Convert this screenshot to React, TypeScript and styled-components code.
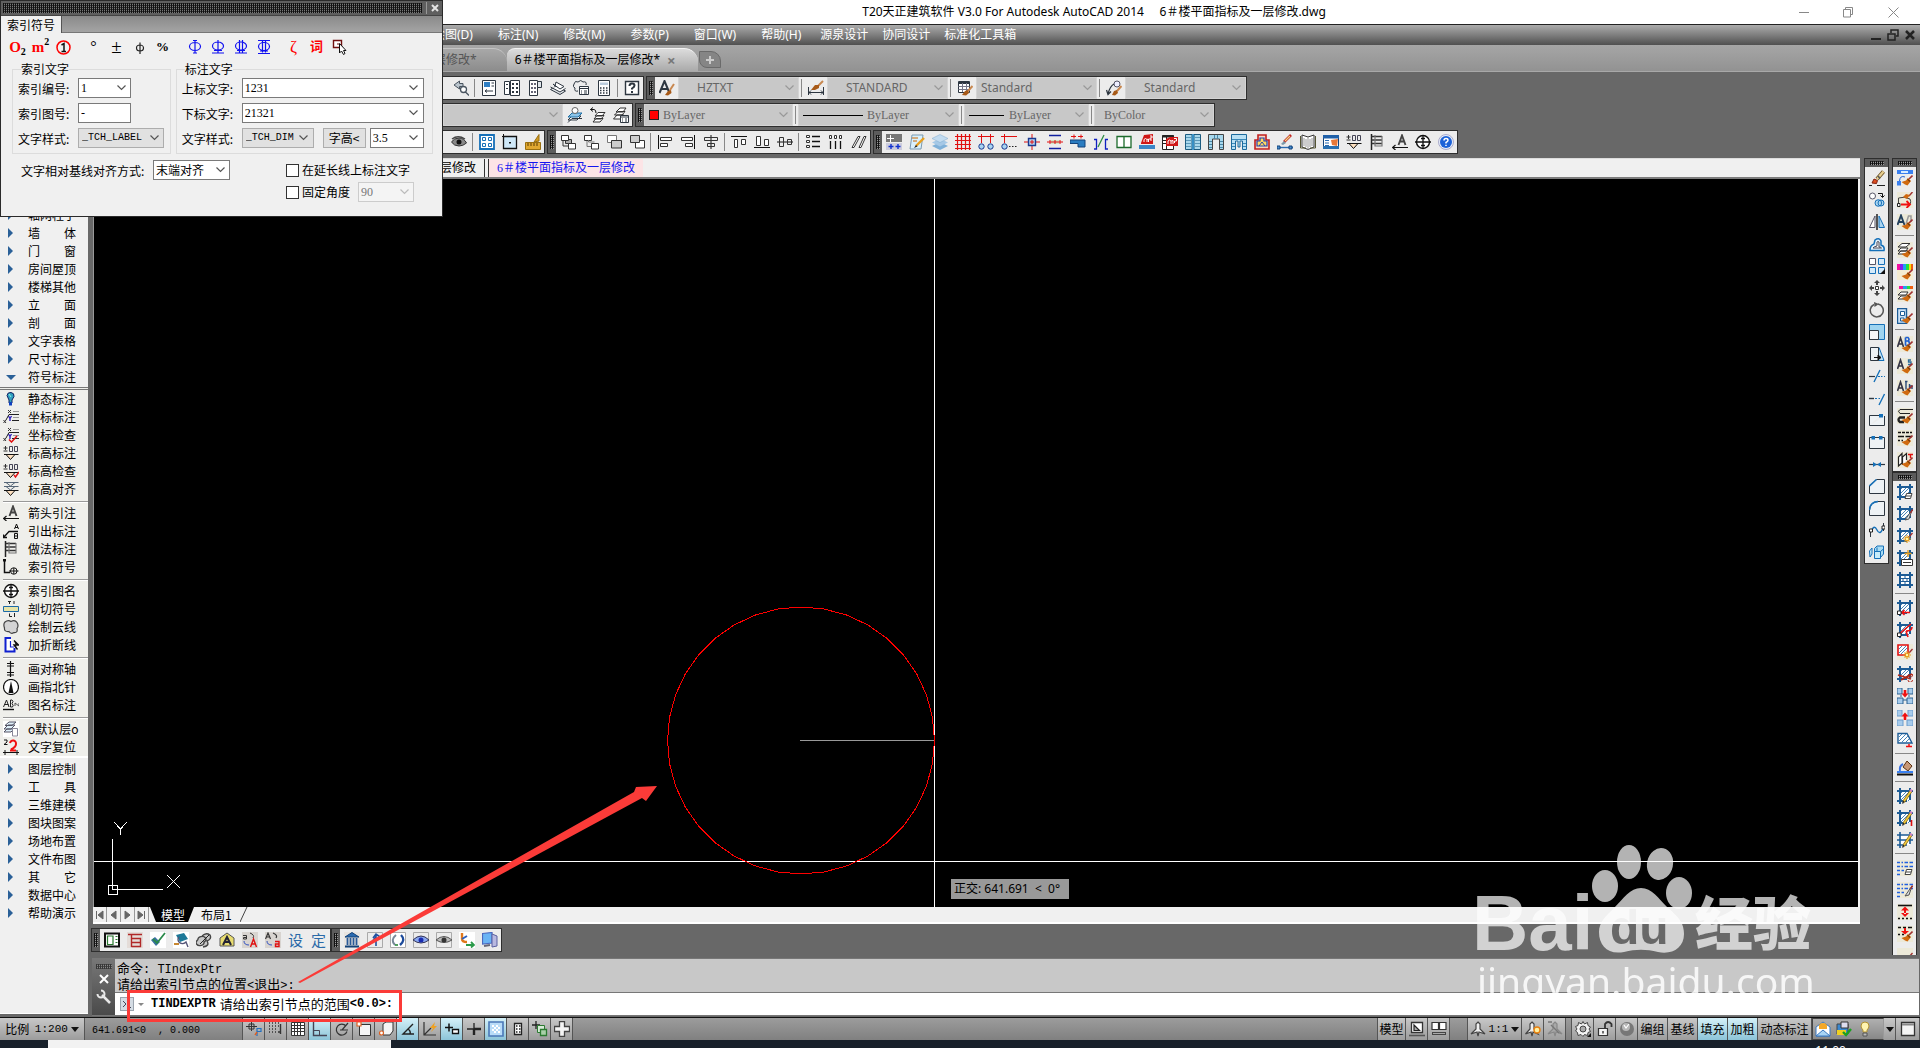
import React from "react";
import styled, { createGlobalStyle, css } from "styled-components";

const sans = `"Noto Sans", "Noto Sans CJK SC", sans-serif`;
const cjk = `"Noto Sans CJK SC", "Noto Sans", sans-serif`;
const song = `"Liberation Serif", "Noto Sans CJK SC", serif`;
const mono = `"Liberation Mono", "Noto Sans CJK SC", monospace`;

const GlobalStyle = createGlobalStyle`
  * { box-sizing: border-box; }
  body { margin: 0; background: #686868; overflow: hidden; }
  button, input, select { font: inherit; color: inherit; margin: 0; padding: 0; border: 0; border-radius: 0; background: none; }
  select { appearance: none; }
`;

/* ---------- glyph library: [path, stroke, fill, stroke width] ---------- */

type Stroke = [string, string?, string?, number?];

const K = "#2d3640";
const BL = "#1670b8";
const LB = "#a9d4f0";
const R = "#e01010";
const N = "none";

const brush: Stroke[] = [
  ["M15.500 5.500L12 9", "#a03030", N, 1.6],
  ["M4.500 12L9 10.500L11 8L14 11L10.500 15.500L8 14.500Z", N, "#d06a10"],
  ["M10.500 9L13 11.500", "#7a3c08", N, 1.2],
];
const paper: Stroke[] = [["M0 0H16V16H0Z", N, "#ece9d8"]];
const pencil: Stroke[] = [
  ["M14 3L6.500 14", "#7a5a10", N, 3],
  ["M14 3L6.500 14", "#f0cc40", N, 1.6],
  ["M13.500 3.500L14.500 1.500", "#d080c0", N, 2.6],
  ["M7 13L5.500 15.500", "#222", N, 1.4],
];
const spark: Stroke[] = [
  ["M15.500 5L12 9", "#a03030", N, 1.4],
  ["M10 7V15M6 11H14M7.500 8.500L12.500 13.500M12.500 8.500L7.500 13.500", "#e8a020", N, 1.2],
  ["M9 10H11V12H9Z", N, "#fff7a0"],
];
const frame: Stroke[] = [
  ["M3 3H13V13H3Z", N, "#fff"],
  ["M3 6L6 3M3 10L10 3M3 13L13 3M7 13L13 7M11 13L13 11", "#4a86b8", N, 1],
  ["M3 0V16M13 0V12M0 3H16M0 13H10", "#1d5c96", N, 2],
];
const eraserBox: Stroke[] = [["M8 14.500L9.500 9.500H15L13.500 14.500Z", "#444", "#fff"], ["M9 12H14", "#444"]];
const knife: Stroke[] = [["M15 4L8 14L12 13Z", "#555", "#d8dde0"], ["M15.500 3.500L13.500 7", "#a03030", N, 1.5]];
const dashes: Stroke[] = [["M0 2.500H3M4.500 2.500H6M7.500 2.500H11M12.500 2.500H16", "#2060e0", N, 1.4], ["M0 6.500H3M4.500 6.500H6M7.500 6.500H11M12.500 6.500H16", "#2060e0", N, 1.4], ["M0 10.500H3M4.500 10.500H7M0 14.500H3", "#2060e0", N, 1.4]];
const elev: Stroke[] = [
  ["M2.500 1V5M0.500 3H4.500M0.500 6H4.500", "#333"],
  ["M6.500 1.500H9.500V6.500H6.500ZM11.500 1.500H14.500V6.500H11.500Z", "#445"],
  ["M1 9.500H15.500M3 9.500L7.500 14.500L12 9.500", "#111", "#fde0c0"],
];
const coord: Stroke[] = [
  ["M0.500 14L3 11M0.500 11L3 14M5 1L8 4M8 1L5 4", "#333"],
  ["M5.500 7L7 9.500L8.500 7M7 9.500V12", "#3020c0", N, 1.4],
  ["M3 11L6 5.500H16M9 11.500H16", "#222"],
  ["M10 2.500H16M10 8.500H16", "#999"],
];

const glyphs: Record<string, Stroke[]> = {
  zoomPrev: [["M6.500 1L1 5L6.500 9V6.500H10V3.500H6.500Z", "#4a5560", "#b9c4cc"], ["M7.500 9.500A3 3 0 1 0 13.500 9.500A3 3 0 1 0 7.500 9.500M12.500 12L16 15.500", "#4a5560", "#fff", 1.3]],
  props: [["M1.500 0.500H14.500V15.500H1.500Z", K, "#fff"], ["M3 2H9V7H3Z", N, "#2f7fc4"], ["M10.500 3H13M10.500 6H13M4 11H12M4 11L6 9.500M4 11L6 12.500", K]],
  design: [["M0.500 1.500H5.500V14.500H0.500ZM6.500 0.500H15.500V15.500H6.500Z", K, "#fff"], ["M8 3H10V5H8ZM12 3H14V5H12ZM8 7H10V9H8ZM12 7H14V9H12ZM8 11H10V13H8ZM12 11H14V13H12ZM2 4H4V5H2ZM2 8H4V9H2Z", N, K]],
  palettes: [["M2.500 0.500H10.500V15.500H2.500Z", K, "#fff"], ["M10.500 1.500H14.500V7.500H10.500Z", K, "#dfe5ea"], ["M4 3H6V5H4ZM7 3H9V5H7ZM4 7H6V9H4ZM7 7H9V9H7ZM4 11H6V13H4ZM7 11H9V13H7Z", N, "#667"]],
  sheets: [["M0.500 9.500L10 14.500L15.500 11L6 6Z", K, "#e3e7ea"], ["M0.500 7L10 12L15.500 8.500M3 4L10 9L14 6.500L6 2L5 6Z", K, "#fff"]],
  markup: [["M1 4Q2 0 5 2Q8 -1 10 2Q14 1 13 5M1 4Q-1 7 2 8Q1 12 5 11", K], ["M6.500 6.500H15.500V14.500H6.500Z", K, "#fff"], ["M7 8.500H15M8 11H9M11 11H14M8 13H9M11 13H14", K]],
  calc: [["M2.500 0.500H13.500V15.500H2.500Z", K, "#fff"], ["M4 2.500H12V5H4Z", N, "#bcd"], ["M4 8H5.500M7 8H8.500M10 8H11.500M4 10.500H5.500M7 10.500H8.500M10 10.500H11.500M4 13H5.500M7 13H8.500M10 13H11.500", K, N, 1.5]],
  help: [["M1.500 1.500H14.500V14.500H1.500Z", K, "#fff", 1.4], ["M5.500 6Q5.500 3.500 8 3.500Q10.500 3.500 10.500 5.500Q10.500 7 8 8.500V9.500M8 11V13", K, N, 2]],
  textStyle: [["M0.500 13L5.500 1L10.500 13M2.500 9H9", K, N, 2], ["M15 4L11 10", "#c88850", N, 2], ["M6 15L9 11L12 10L12.500 13L9 15.500Z", N, "#a85a18"]],
  dimStyle: [["M0.500 7V15M15.500 7V15M1 12.500H15M3 10.500L1 12.500L3 14.500M13 10.500L15 12.500L13 14.500", K], ["M15 1L10 6", "#c88850", N, 2], ["M3 10L7 5L11 5L11 8L7 10Z", N, "#a85a18"]],
  tableStyle: [["M1.500 1.500H12.500V12.500H1.500Z", K, "#fff"], ["M1.500 3H12.500", K, N, 2], ["M1.500 6.500H12.500M1.500 9.500H12.500M5.500 3V12M9.500 3V12", "#778"], ["M15.500 6L11 11", "#c88850", N, 2], ["M5 15L8 11L11 10L12 13L9 15.500Z", N, "#a85a18"]],
  leaderStyle: [["M8 4A3 3 0 1 0 14 4A3 3 0 1 0 8 4", "#556", "#eef"], ["M8 4Q4 6 2 14M0.500 10L2 14.500L5 11.500", K, N, 1.3], ["M15.500 6L11 11", "#c88850", N, 2], ["M6 15L8 11L11 10L12 13L9 15.500Z", N, "#a85a18"]],
  layerState: [["M1 13L5 9H14L10 13ZM1 15.500L5 11.500H15", K, "#fff"], ["M1 10L5 6H15L11 10Z", "#1c6fa5", "#8cc4e8"], ["M5 3.500A3 3 0 1 0 11 3.500A3 3 0 1 0 5 3.500", "#666", "#fff"]],
  layerPrev: [["M3 15L6 11.500H13L10 15ZM4 12L7 8.500H14L11 12ZM5 9L8 5.500H15L12 9Z", "#333", "#fff"], ["M0.500 2.500H4Q6 2.500 6 6M3 0.500L0.500 2.500L3 4.500", "#111"]],
  layerMgr: [["M0.500 12L4 8H11L8 12ZM1.500 8L5 4.500H12L9 8ZM3 5L7 1H13L10 5Z", "#333", "#fff"], ["M7.500 8.500H15.500V15.500H7.500Z", K, "#fff"], ["M8 10H15M9 12H10M12 12H14M9 14H10M12 14H14", K]],
  eye: [["M0.500 8Q3 4 8 4Q13 4 15.500 9Q12 12 8 12Q3 12 0.500 8Z", "#333", "#888"], ["M5.500 8A2.500 2.500 0 1 0 10.500 8A2.500 2.500 0 1 0 5.500 8", N, "#111"], ["M1 5Q7 0.500 14 5", "#444", N, 1.4]],
  vports: [["M1 1H15V15H1Z", BL, "#fff", 1.8], ["M3.500 3.500H6.500V6.500H3.500ZM9.500 3.500H12.500V6.500H9.500ZM3.500 9.500H6.500V12.500H3.500ZM9.500 9.500H12.500V12.500H9.500Z", BL]],
  xclip: [["M1.500 2.500H14.500V14.500H1.500Z", "#111", "#cfe8f8", 1.3], ["M7 8H9V9.500H7Z", N, "#111"], ["M0 2.500H4M1.500 0V4", "#111"]],
  measure: [["M0.500 8.500H15.500V15.500H0.500Z", "#9a7010", "#e0a830"], ["M3 9V12M6 9V12M9 9V12M12 9V12", "#5a3a00"], ["M14 0.500L9 8L14 7Z", "#9a7010", "#d09820"]],
  front: [["M5.500 5.500H11.500V9.500H5.500Z", "#333", "#aaa"], ["M1.500 1.500H8.500V6.500H1.500Z", "#333", "#fff"], ["M8.500 9.500H15.500V15H8.500Z", "#333", "#fff"], ["M3 6V12H8", "#333"]],
  back: [["M1.500 1.500H8.500V6.500H1.500Z", "#333", "#fff"], ["M8.500 9.500H15.500V15H8.500Z", "#333", "#fff"], ["M5.500 6V8H11.500M4 7V12.500H8", "#777"]],
  above: [["M1.500 1.500H10.500V8.500H1.500Z", "#777", "#fff"], ["M5.500 6.500H15.500V14H5.500Z", "#333", "#ccc"]],
  under: [["M6.500 6.500H15.500V14H6.500Z", "#333", "#fff"], ["M1.500 1.500H10.500V8.500H1.500Z", "#333", "#ccc"]],
  alignL: [["M1.500 1V15", "#111"], ["M3.500 3.500H14.500V6.500H3.500ZM3.500 9.500H10.500V12.500H3.500Z", "#333", "#fff"]],
  alignR: [["M14.500 1V15", "#111"], ["M1.500 3.500H12.500V6.500H1.500ZM5.500 9.500H12.500V12.500H5.500Z", "#333", "#fff"]],
  alignC: [["M8 1V15", "#111"], ["M1.500 3.500H14.500V6.500H1.500ZM4.500 9.500H11.500V12.500H4.500Z", "#333", N]],
  alignT: [["M0 2.500H16", "#111"], ["M3.500 5.500H6.500V13.500H3.500ZM10.500 5.500H14.500V10.500H10.500Z", "#333", "#fff"]],
  alignB: [["M0 13.500H16", "#111"], ["M2.500 2.500H6.500V11.500H2.500ZM10.500 5.500H14.500V11.500H10.500Z", "#333", "#fff"]],
  alignM: [["M0 8H16", "#111"], ["M2.500 3.500H6.500V12.500H2.500ZM10.500 5.500H14.500V10.500H10.500Z", "#333", N]],
  distV: [["M1.500 1.500H4.500V3.500H1.500ZM1.500 6.500H4.500V8.500H1.500ZM1.500 11.500H4.500V13.500H1.500Z", "#333", "#fff"], ["M7 2.500H15M7 7.500H15M7 12.500H15", "#111", N, 1.3]],
  distH: [["M1.500 1.500H3.500V4.500H1.500ZM6.500 1.500H8.500V4.500H6.500ZM11.500 1.500H13.500V4.500H11.500Z", "#333", "#fff"], ["M2.500 7V15M7.500 7V15M12.500 7V15", "#111", N, 1.3]],
  distS: [["M1 13.500L7 2.500H9L3 13.500ZM8 13.500L13 2.500H15L10 13.500Z", "#333", "#fff"]],
  tableDoor: [["M0 0H16V8H0Z", N, "#777"], ["M4.500 1V8M1 4.500H8", "#fff"], ["M0 9H16V16H0Z", N, "#ccd"], ["M5 10V15M2.500 12.500H7.500M12 10V15M9.500 12.500H14.500", "#1030d0", N, 1.4]],
  editNote: [["M3 1H14L12 15H1Z", "#7a9ab0", "#d8f0fc"], ["M3 4H9M4 7H8", "#c60"], ["M15 4L7 12", "#e8a020", N, 2.4], ["M5 14L7 11L8.500 12.500Z", N, "#222"]],
  layersBlue: [["M0 12L8 8L16 12L8 16Z", N, "#7fb0d8"], ["M0 8.500L8 4.500L16 8.500L8 12.500Z", N, "#a5c8e6"], ["M0 4.500L8 0.500L16 4.500L8 8.500Z", "#7fa8cc", "#c3dcf0", 0.5]],
  gridRed: [["M2.500 0V16M6.500 0V16M10.500 0V16M14.500 0V16M0 2.500H16M0 6.500H16M0 10.500H16M0 14.500H16", R, N, 1.2]],
  axisTwo: [["M0 2.500H16M3.500 0V9M12.500 0V9", R], ["M0.800 12.500A2.700 2.700 0 1 0 6.200 12.500A2.700 2.700 0 1 0 0.800 12.500M9.800 12.500A2.700 2.700 0 1 0 15.200 12.500A2.700 2.700 0 1 0 9.800 12.500", "#1a3a90", LB]],
  axisOne: [["M0 2.500H16M3.500 0V9", R], ["M0.800 12.500A2.700 2.700 0 1 0 6.200 12.500A2.700 2.700 0 1 0 0.800 12.500", "#1a3a90", LB], ["M8 12.500H9.500M11 12.500H12.500M14 12.500H15.500", "#222"]],
  column: [["M8 0V16M0 8H16", R], ["M4.500 4.500H11.500V11.500H4.500Z", "#1a3a90", "#b8d0f0", 1.4], ["M8 6V10M6 8H10", R]],
  wall: [["M2 1.500H14M2 14.500H14", "#1020a0", N, 1.5], ["M4 6H12V10H4Z", N, "#cde8c8"], ["M0 8H16M3 6V10M13 6V10M8 6V10", R]],
  beam: [["M0 6H15V13H8V9.500H0Z", "#13437a", "#2a7cc0"], ["M1 2.500H6M8 2.500H13M4 0.500V4.500M11 0.500V4.500", R]],
  door: [["M1 5.500H3.500V15H1M15 5.500H12.500V15H15", "#1020c0", N, 1.3], ["M5 13L11 1", "#2a8a40", N, 1.2]],
  window2: [["M1 2.500H15V13.500H1ZM8 2.500V13.500", "#1c6a2c", "#fff", 1.3]],
  area: [["M2 9L5 1L14 0V10H2Z", N, "#d01818"], ["M5 8V5.500L6.500 4.500L8 5.500V8M8 5.500L9.500 5V8M11 2H13V4H11V6H13", "#fff"], ["M0 11H16V15H0Z", N, "#3a86c8"]],
  areaTable: [["M0.500 1.500H11.500V15.500H0.500Z", "#222", "#fff"], ["M0 2.500H12", "#222", N, 2], ["M0.500 6.500H11M0.500 9.500H11M4.500 3V15", "#222"], ["M4 5L8 3H16V12H4Z", N, "#d01818"], ["M6 10V7L7.500 6L9 7V10M9 7L11 6.500V10M12 4.500H14.500V7H12.500V9", "#fff"]],
  stairsA: [["M0.500 0.500H7V15.500H0.500ZM9 0.500H15.500V15.500H9Z", "#1c5c80", "#a9d8ec"], ["M1 3.500H6M1 6.500H6M1 9.500H6M1 12.500H6M9.500 3.500H15M9.500 6.500H15M9.500 9.500H15M9.500 12.500H15", "#5a98b8"], ["M8 0V16", "#1c88c8", N, 1.5]],
  stairsB: [["M0.500 15.500V0.500H15.500V15.500H11.500V5H4.500V15.500Z", "#444", "#a9d8ec"], ["M1 7.500H4M1 10.500H4M1 13.500H4M12 7.500H15M12 10.500H15M12 13.500H15M6.500 1V5M9.500 1V5", "#4a88a8"]],
  stairsC: [["M0.500 0.500H15.500V15.500H11.500V7H9V13H7V7H4.500V15.500H0.500Z", "#1c6a9c", "#b9e0f4"], ["M1 5.500H15M1 9.500H4M12 9.500H15M1 12.500H4M12 12.500H15", "#3a88b8"]],
  plot: [["M1 15V6H4V1H12V6H15V15Z", "#c02020", "#f8d8c0", 1.6], ["M6 4H10V7H13V12H3V7H6Z", "#2040b0", "#ffd860", 1.2], ["M5 12L8 8L11 12", "#2040b0"]],
  brushDim: [["M14 1L7 8", "#c02020", N, 2.6], ["M13 2L8 7", "#f0d880", N, 1.2], ["M4 10L7 7L9 9L6 11Z", N, "#7a98a8"], ["M0 13.500H16", "#2a6ab0", N, 1.4], ["M0 12H3V15H0ZM12 12H15V15H12Z", "#13437a", "#4a90d0"]],
  book: [["M8 3L2 1V13L8 15.500L14 13V1Z", "#333", "#fff"], ["M8 3V15.500M4 4V12M6 5V13M10 5V13M12 4V12", "#999"], ["M0.500 2V14H6M15.500 2V14H10", "#553"]],
  panel: [["M0.500 1.500H15.500V14.500H0.500Z", "#13437a", "#fff"], ["M0 1H16V4.500H0Z", N, "#2060a8"], ["M2 6.500H6M2 9H6M2 11.500H6", "#2a6ab0"], ["M8 6L15 5L14 12L9 11Z", N, "#e87838"], ["M0 12H16V15H0Z", N, "#2a70b0"]],
  elevMark: elev,
  practice: [["M2.500 0V16", "#222", N, 1.5], ["M2.500 2.500H13M2.500 6H13M2.500 9.500H13", "#333", N, 1.3], ["M6 1V12H13V2", "#777", N, 1.2]],
  arrowA: [["M6.500 11L10 1.500L13.500 11M7.500 7.500H12.500", "#444", N, 1.9], ["M0.500 13.500H16M3.500 11L0.500 13.500L3.500 16", "#111", N, 1.2]],
  indexName: [["M1.500 8A6.500 6.500 0 1 0 14.500 8A6.500 6.500 0 1 0 1.500 8", "#111", "#fff", 1.4], ["M0 8H16M8 2V14M6 4.500H10M6 11.500H10", "#111", N, 1.3]],
  helpBall: [["M0.500 8A7.500 7.500 0 1 0 15.500 8A7.500 7.500 0 1 0 0.500 8", "#aac", "#e6eefa"], ["M2 8A6 6 0 1 0 14 8A6 6 0 1 0 2 8", N, "#1c62d8"], ["M6 6.500Q6 4.500 8 4.500Q10 4.500 10 6.200Q10 7.500 8 8.500V9.500M8 10.800V12", "#fff", N, 1.5]],
  /* modify palette */
  erase: [["M14.500 1.500L8 9", "#6b5020", N, 4], ["M14.500 1.500L8 9", "#e8cf90", N, 2.4], ["M9 6L11 8.500", "#555", N, 1.5], ["M3 13L5 9L8.500 10.500L7.500 13.500Z", "#802010", "#e05020"], ["M0 15.500H3M8 15.500H16", "#222"]],
  copy: [["M0.500 4A3 3 0 1 0 6.500 4A3 3 0 1 0 0.500 4", "#556", "#fff"], ["M9 11A3 3 0 1 0 15 11A3 3 0 1 0 9 11M6 11A3.300 3.300 0 1 0 12.600 11A3.300 3.300 0 1 0 6 11", BL, LB], ["M9 1.500H13.500V5M11.500 3.500L13.500 5.500L15.500 3.500", "#111"]],
  mirror: [["M6 2L0.500 13.500H6Z", "#556", "#fff"], ["M10 2L15.500 13.500H10Z", BL, LB], ["M8 0V16", "#111", N, 1.4]],
  offset: [["M1 14.500H15Q16 10 12 9V5Q10 1 6 4L5 8Q1 9 1 14.500Z", BL, "#e4f2fc", 1.5], ["M4 12H12.500Q12 11 10 11V6Q8.500 5 8 6V10Q5 10.500 4 12Z", "#445", "#fff"]],
  array: [["M0.500 0.500H6.500V6.500H0.500Z", "#556", "#fff"], ["M9.500 0.500H15.500V6.500H9.500ZM0.500 9.500H6.500V15.500H0.500ZM9.500 9.500H15.500V15.500H9.500Z", BL, "#d4eafa"], ["M16 11V16H11Z", N, "#111"]],
  move: [["M6.500 6.500H9.500V9.500H6.500Z", "#333", "#fff"], ["M8 0L11 3H9V5H7V3H5ZM8 16L11 13H9V11H7V13H5ZM0 8L3 5V7H5V9H3V11ZM16 8L13 5V7H11V9H13V11Z", N, "#444"]],
  rotate: [["M5 2.500A6.500 6.500 0 1 0 9 2", "#555", N, 1.5], ["M5 0L10 2L5.500 5Z", N, "#555"]],
  scale: [["M0.500 0.500H15.500V15.500H0.500Z", BL, "#9fd4f0"], ["M0.500 6.500H9.500V15.500H0.500Z", K, "#f4f6f8"]],
  stretch: [["M10 1.500L15 14.500H8V1.500Z", BL, "#bfe0f4"], ["M1.500 1.500H9.500V14.500H1.500Z", K, "#eef2f5"], ["M5 11.500H11M9 9L12 11.500L9 14Z", "#111", "#111"]],
  trim: [["M0 8.500H6", K, N, 1.2], ["M5 14L11 2", BL, N, 1.4], ["M9 8.500H11M12 8.500H13.500M15 8.500H16", BL]],
  extend: [["M0 8.500H5", K, N, 1.4], ["M6 8.500H8M9.500 8.500H11", BL], ["M10 15L15.500 4", BL, N, 1.4]],
  breakPt: [["M0.500 13.500V3.500H11M15.500 4V13.500H0.500", K, "#eef2f5"], ["M10 2H14V5.500H10Z", N, BL]],
  breakOn: [["M3 3.500H0.500V14.500H15.500V3.500H13M5.500 3.500H10", K, "#eef2f5"], ["M2.500 2H6V5.500H2.500ZM10 2H13.500V5.500H10Z", N, BL]],
  join: [["M0 8.500H16", K, N, 1.2], ["M4 6L8 8.500L4 11ZM12 6L8 8.500L12 11Z", N, BL]],
  chamfer: [["M0.500 8L7.500 1.500H15.500V15.500H0.500Z", K, "#eef2f5"], ["M0.500 8L7.500 1.500", BL, N, 1.6]],
  fillet: [["M0.500 15.500V10Q1 2 9 1.500H15.500V15.500Z", K, "#eef2f5"], ["M0.500 10Q1 2 9 1.500", BL, N, 1.6]],
  blend: [["M1.500 15V7M14.500 1V9", K], ["M2.500 9Q5 2 8 8Q11 14 14 6", BL, N, 1.4], ["M0.500 7H3.500V10H0.500ZM13 4H16V7H13Z", "#222", "#fff"]],
  explode: [["M5.500 4.500L8 2H14.500V10L12 13H5.500Z", BL, "#a9dcf4"], ["M5.500 7.500H11.500V14.500H5.500ZM11.500 7.500L15 4.500M0.500 7L3 4V10L1 13ZM8 7V3.500", BL, "#c8ecfa"]],
  /* layer / property palette */
  pA: [["M0 0H16V4H0Z", N, "#3a80f0"], ["M4 1H11V3H4Z", N, "#d8ecff"], ["M0 11H4V15.500H0Z", N, "#3a80f0"], ["M2.500 11Q3 5 8 7", "#2060d0"], ...brush],
  pB: [...paper, ["M1.500 12V6Q7 4 13 7Q15 12 11 14", "#444"], ["M0.500 11.500H3V14.500H0.500Z", "#222", "#fff"], ["M4 12.500H12M9.500 9L13 12.500L9.500 16", "#f01010", N, 1.8], ["M15.500 0L12 4", "#a03030", N, 1.4], ["M6 5L9 2L13 3L10 7Z", N, "#d06a10"]],
  pC: [...paper, ["M0.500 11L4 1.500L7.500 11M2 8H6", "#24405c", N, 1.9], ["M9 10L11.500 2H14V8", "#999", N, 1.5], ...brush],
  pD: [...paper, ["M1 12L4 9H11L9 12ZM1 9L4 6H11L9 9ZM1 5L5 1.500H13L9 5Z", "#333", "#fff"], ...brush],
  pE: [["M0 0H16V16H0Z", N, "#f4ecd0"], ["M1.500 0V6", "#f010a0", N, 3], ["M4.500 0V6", "#8020f0", N, 3], ["M7.500 0V6", "#20a0f0", N, 3], ["M10.500 0V6", "#20e040", N, 3], ["M13 0V6", "#f8e010", N, 2], ["M15 0V6", "#f06010", N, 2], ...brush],
  pF: [...paper, ["M2 1.500H6", "#f010a0", N, 3], ["M6 1.500H10", "#20a0f0", N, 3], ["M10 1.500H13", "#20e040", N, 3], ["M13 1.500H16", "#f06010", N, 3], ["M1 13L4 10H11L9 13ZM1 9L4 6H11L9 9Z", "#333", "#fff"], ...brush],
  pG: [["M0.500 0.500H9.500V15.500H0.500Z", "#1d5c96", "#cfe4f8", 1.4], ["M3.500 3.500H7.500V7.500H3.500ZM3.500 10H7V13H3.500Z", "#1d5c96", "#fff"], ...brush],
  pH: [...paper, ["M0.500 11L3.500 2L6.500 11M1.500 8H5.500", "#334", N, 1.6], ["M8.500 1.500V9.500M8.500 1.500H11Q13 3.500 11 5H8.500M11 5Q14 7 11 9.500H8.500", "#2060d0", N, 1.7], ...brush],
  pI: [...paper, ["M0.500 11L3.500 2L6.500 11M1.500 8H5.500", "#334", N, 1.6], ["M14 2H11.500V4H14V6.500H11", "#2a6a98", N, 1.3], ...brush],
  pJ: [...paper, ["M0.500 11L3.500 2L6.500 11M1.500 8H5.500", "#334", N, 1.6], ["M9 1.500V9.500M8 1.500H10.500M12.500 4V9M12.500 6H15V9", "#2a4a78", N, 1.4], ...brush],
  pK: [...paper, ["M16 1.500H3Q0 3 3 5.500H13", "#222"], ["M8 9.500H3Q0 11.500 3 14H7", "#222", N, 2.4], ...brush],
  pL: [...paper, ["M1 2.500H4M5 2.500H8M9 2.500H12M13 2.500H15M1 6.500H7M8.500 6.500H15M1 10.500H3M4.500 10.500H6", "#111", N, 1.3], ...brush],
  pM: [...paper, ["M1.500 14V5L5 1.500V11ZM5.500 13V5L9.500 1.500V8", "#222", "#fff", 1.2], ["M11 2.500H16M13.500 2V6", R, N, 1.4], ...brush],
  /* hatch palette */
  hA: [...frame, ...eraserBox],
  hB: [...frame, ...knife],
  hC: [...frame, ...spark],
  hD: [...frame, ["M4.500 9.500H15.500V15.500H4.500Z", "#333", "#fff"], ["M6 12.500H14", "#333"], ["M11 0V7M7.500 3.500H14.500", "#e8a020", N, 1.4]],
  hE: [["M3 0V16M13 0V16M0 3H16M0 13H16", "#1d5c96", N, 2], ["M4 4H12V12H4Z", N, "#fff"], ["M4 6.500H12M4 9.500H12M8 4V6.500M6 7V9.500M10 7V9.500M8 10V12", "#1d5c96"]],
  hF: [...frame, ["M5 12.500H13M7.500 10L5 12.500L7.500 15", "#f01010", N, 1.6], ["M0.500 11H4V14.500H0.500Z", "#222", "#fff"]],
  hG: [...frame, ["M1 13L14 2M15 5Q15 9 9 9M9 9L11 15", "#f01010", N, 1.6], ["M0.500 11H4V14.500H0.500Z", "#222", "#fff"]],
  hH: [...paper, ["M1 1H11V11H1Z", R, "#fff", 1.6], ["M2 5L5 2M2 9L9 2M4 10L10 4", "#4a86b8"], ...spark],
  hI: [...frame, ["M1 9L14 13M15 8L4 14", "#b02818", N, 1.8], ["M12 8A2 2 0 1 0 15.500 8M11 14A2 2 0 1 0 15.500 14", "#b02818"]],
  hJ: [["M0 0H5V6H0ZM11 0H16V6H11ZM0 10H6V16H0ZM10 10H16V16H10Z", "#2a6090", "#a8ccec"], ["M8 2V7", "#f01010", N, 2.6], ["M4.500 5.500H11.500L8 9.500Z", N, "#f01010"], ["M6 12H10M3 8H5M11 8H13", "#2a6090"]],
  hK: [["M0 0H5V6H0ZM11 0H16V6H11ZM0 10H6V16H0ZM10 10H16V16H10Z", "#6a9ccc", "#a8ccec"], ["M8 5V10", "#f01010", N, 2.6], ["M4.500 6.500H11.500L8 2.500Z", N, "#f01010"]],
  hL: [["M1 1.500H10L15 11H1Z", "#1d5c96", "#fff", 1.4], ["M2 5L5 2M2 9L9 2M5 10L11 4M9 10L12 7", "#4a86b8"], ["M9 14.500H15M12 12V15", "#f01010", N, 1.5]],
  hM: [["M6 7L10 1L15 6L11 11Z", "#5a3010", "#c89878"], ["M6 4Q2 6 3 11", "#3a70e0", N, 2], ["M0 11H16V13H0Z", N, "#3a80f0"], ["M0 14.500H16", "#111", N, 2]],
  hN: [...frame, ...pencil],
  hO: [...frame, ...pencil, ["M14.500 10V16", R, N, 1.6]],
  hP: [["M3 3H13V13H3Z", N, "#fff"], ["M3 0V16M13 0V12M0 3H16M0 8H16M0 13H10", "#1d5c96", N, 1.6], ...pencil],
  lA: [...paper, ...dashes, ...eraserBox],
  lB: [...paper, ...dashes, ...knife],
  lC: [...paper, ["M1 1.500H15", "#111", N, 1.6], ["M1 14.500H3M5 14.500H7M9 14.500H11M13 14.500H15", "#111", N, 1.6], ["M8 2.500L12 6.500H4ZM8 13L12 9H4ZM7 6H9V10H7Z", N, "#f01010"]],
  lD: [...paper, ["M1 1.500H4M6 1.500H9M11 1.500H15M1 8.500H3M5 8.500H7", "#111", N, 1.4], ["M7 2H9V5H12L8 8.500L4 5H7Z", N, "#f01010"], ...brush],
  lE: [...paper, ...spark],
  /* palette tree */
  bulb: [["M4 4.500A3.500 3.500 0 1 1 11 5.500L9 9V12H6V9Z", "#102060", "#30a0c0"], ["M6 11H9V14.500H6Z", N, "#1040c0"], ["M6 3L8 6", "#90f0e0"]],
  coord,
  coordCheck: [...coord, ["M6 12.500L8.500 15L14 9", R, N, 1.5]],
  elevCheck: [...elev, ["M11 12L12.500 14L16 9", R, N, 1.4]],
  elevAlign: [["M1 1.500H15.500M3 1.500L7.500 5L12 1.500M1 5.500H15.500M3 5.500L7.500 9L12 5.500", "#567"], ["M1 9.500H15.500M3 9.500L7.500 14.500L12 9.500", "#111", "#fde0c0"]],
  leaderOut: [["M0.500 14.500L6 8.500H15M0.500 11.500V14.500H4", "#111", N, 1.3], ["M11.500 6L13.500 1L15.500 6M12 4.500H15M11.500 10.500V15.500H14.500V10.500ZM11.500 13H14.500", "#111"]],
  index: [["M1.500 0V13.500H7", "#111", N, 1.5], ["M7.500 12A3 3 0 1 0 14 12A3 3 0 1 0 7.500 12M6 12H15.500M10.800 9V15", "#111"], ["M0 0H3V2.500H0Z", N, "#111"]],
  section: [["M0.500 5.500H15.500V10.500H0.500Z", "#1c6aa8", "#e8e4a8"], ["M6.500 0V3M5 0.500H8M11 0V3M6.500 12.500V15.500H9M11.500 12V16", "#222"]],
  cloud: [["M2 3Q5 0.500 8 2.500Q12 0.500 14 3.500Q16 7 14 9.500Q15 14 11 13.500Q8 15.500 6 12.500Q1 13 1.500 9Q0 5 2 3Z", "#444", "#d4d4d4", 1.2]],
  breakLine: [["M8 1H2.500V14.500H11.500V11", "#1020d0", "#fff", 2], ["M11 3.500L15.500 8L11 8L14.500 12.500", "#111", "#111", 1.4], ["M7.500 4V10H11", "#1020d0", N, 1.2]],
  symAxis: [["M7.500 0V16", "#111", N, 1.2], ["M4 2.500H11M4 5H11M4 11.500H11M4 14H11", "#111"]],
  north: [["M0.500 8A7.500 7.500 0 1 0 15.500 8A7.500 7.500 0 1 0 0.500 8", "#111", "#fff", 1.2], ["M8 2L10.500 14H5.500Z", N, "#111"]],
  caption: [["M0.500 10L3.500 3L6 10M1.500 7.500H5.500M7.500 3V10H9.500Q11 8.500 9 6.500Q11 4 9 3H7.500", "#222"], ["M0 12.500H11", "#111", N, 1.4], ["M12 9V6L16 9V6", "#555"]],
  defLayer: [["M0 0H16V16H0Z", N, "#fff"], ["M1 8L5 4H12L8 8ZM1 11L4 8H11L8 11ZM2 4.500L6 1H13L9 4.500Z", "#556", "#dff0fa"], ["M9.500 7.500H14.500V15H9.500Z", "#889", "#fff"]],
  textReset: [["M1 1H4V3L1 5.500H4.500", "#111"], ["M7 4A3 3 0 0 1 13 5Q13 8 8 10.500M13 11.500H7", "#f01010", N, 2], ["M0 13.500H16M2 11V16M14 11V16", "#111"]],
  /* bottom palettes */
  bA: [["M1 1.500H15V14.500H1Z", "#111", "#fff", 2], ["M3.500 4H9V12.500H3.500Z", "#2a7a30", "#fff", 1.2], ["M12.500 4V5M12.500 7V8M12.500 10V11", "#2a7a30", N, 2]],
  bB: [["M0 0H16V16H0Z", N, "#e4dcd8"], ["M1 2.500H15M4.500 3V15M4.500 6.500H13.500V14.500H4.500M4.500 10.500H13", "#b02828", N, 1.4]],
  bC: [["M0 0H16V16H0Z", N, "#fff"], ["M1 8L6 14L10 10L5 5Z", N, "#3a70a0"], ["M3 7L7 11L15 1", "#2a8a4a", N, 1.8]],
  bD: [["M0 0H16V16H0Z", N, "#fff"], ["M3 3L11 1L15 7L7 10Z", N, "#1c7898"], ["M6 5A4 3.500 0 1 0 13 10L15 15", "#557", N, 1.4], ["M1 12H6", "#c88830", N, 2]],
  bE: [["M2 8A4 3 0 1 1 8 10A4 3 0 1 1 2 8M6 4Q10 0 14 3Q16 7 11 9Q14 14 7 15", "#444", "#c8c8c8", 1.4], ["M4 12L13 3", "#222"]],
  bF: [["M1 6L8 1L15 6V14H1Z", "#555", "#e8dc70"], ["M4 13L8 5L12 13M6 10H10", "#223", N, 2]],
  bG: [["M0 0H16V16H0Z", N, "#d8d4d0"], ["M1 3.500H4.500V7H1.500V5.500H4.500M8 1Q13 3 11 6", "#333"], ["M2 9Q2 13 7 13", "#3050c0"], ["M8.500 15L11.500 7L14.500 15M9.500 12H13.500", R, N, 1.4]],
  bH: [["M0 0H16V16H0Z", N, "#d8d4d0"], ["M0.500 7L3 1L5.500 7M1.500 5H4.500M8 1Q13 3 11 6", "#333", N, 1.2], ["M2 9Q2 13 7 13", "#3050c0"], ["M10 9.500H14V14.500H10.500V12H14", R, N, 1.4]],
  gov: [["M0 0H16V16H0Z", N, "#e8e4e0"], ["M8 0.500L15 5H1Z", "#13437a", "#2a6ab0"], ["M3.500 6V13M6.500 6V13M9.500 6V13M12.500 6V13", "#2a5a98", N, 1.8], ["M1 14.500H15", "#13437a", N, 2]],
  hook: [["M0.500 0.500H15.500V15.500H0.500Z", "#aaa", "#ececec"], ["M2 13L9 5M9 3V14M6 6L9 2L13 5", "#2050a0", N, 1.6]],
  swirl: [["M0.500 0.500H15.500V15.500H0.500Z", "#aaa", "#fff"], ["M6 3Q0 8 5 13", "#789", N, 2], ["M11 3Q16 8 10 13", "#1c4a9a", N, 2.4], ["M5 13H8", "#2a8a3a", N, 1.6]],
  eyeBlue: [["M0.500 0.500H15.500V15.500H0.500Z", "#aaa", "#ececec"], ["M0 8Q8 0 16 8Q8 14 0 8Z", "#335", "#8aa8f0"], ["M5.500 8A2.500 2.500 0 1 0 10.500 8A2.500 2.500 0 1 0 5.500 8", N, "#1a2cb0"]],
  eyeGray: [["M0.500 0.500H15.500V15.500H0.500Z", "#aaa", "#ececec"], ["M0 8Q8 1 16 8Q8 13 0 8Z", "#555", "#bbb"], ["M5.500 8A2.500 2.500 0 1 0 10.500 8A2.500 2.500 0 1 0 5.500 8", N, "#333"]],
  swap: [["M0 0H16V16H0Z", N, "#fff"], ["M3 1V7Q3 10 8 10", "#e0781c", N, 2.4], ["M8 4L3 7", "#2a60c0", N, 2], ["M7 13H14M12 10L15 13L12 15.500", "#2a9a4a", N, 1.8]],
  screens: [["M0.500 1.500L10 0.500V11L0.500 12Z", "#4a68c0", "#6ab4f4", 1.2], ["M10 2L15 4V14L10 15Z", "#5a60a0", "#b8b8e0"], ["M2 14L8 13", "#667", N, 2]],
  /* status bar */
  sInfer: [["M0 5.500H11M5.500 0V10M3 3H8V8H3Z", "#333"], ["M10.500 10.500H15V7.500H11V15", "#2070c0", N, 1.2], ["M9 14L11 11", "#e06020", N, 1.4]],
  sSnap: [["M1 2H2M4 2H5M7 2H8M10 2H11M1 5H2M4 5H5M7 5H8M10 5H11M1 8H2M4 8H5M7 8H8M1 11H2M4 11H5M7 11H8M10 11H13M12.500 3V13", "#333", N, 1.4]],
  sGrid: [["M1.500 1.500H14.500V14.500H1.500ZM4.500 1V15M7.500 1V15M10.500 1V15M1 4.500H15M1 7.500H15M1 10.500H15", "#333", "#fff"]],
  sOrtho: [["M1.500 0V14.500H15", "#445", N, 1.4], ["M1.500 9.500H7.500V14", "#445"]],
  sPolar: [["M12 5A5.500 5.500 0 1 0 13 10.500M8 9L14 2M6 9H14", "#333", N, 1.2]],
  sOsnap: [["M3.500 3.500H14.500V14.500H3.500Z", "#333", "#f4f4f4"], ["M1 1H5V5H1Z", "#e06020", "#fff", 1.2]],
  s3d: [["M5 3L8 1H15V10L12 14H5Z", "#333", "#f4f4f4"], ["M1.500 12A2 2 0 1 0 5.500 12A2 2 0 1 0 1.500 12", "#e06020", "#fff", 1.2]],
  sOtrack: [["M13 3L3 13H14M8 8Q11 10 10 13", "#222", N, 1.4]],
  sDucs: [["M2 1V14H14M2 14L9 7", "#333", N, 1.2], ["M13 1L8 7H11L9 11L15 5H12Z", N, "#f0a020"]],
  sDyn: [["M1 6.500H9M5 2.500V10.500", "#111", N, 1.5], ["M8.500 8.500H14.500V12.500H8.500Z", "#111", "#fff", 1.3]],
  sLwt: [["M1 8H8M8 8V2", "#222", N, 1.3], ["M8 8H15M8 8V14", "#222", N, 2.4]],
  sTpy: [["M1 1H15V15H1Z", "#4a78b8", "#b8dcf8", 1.6], ["M4 4H6V6H4ZM8 4H10V6H8ZM6 6H8V8H6ZM10 6H12V8H10ZM4 8H6V10H4ZM8 8H10V10H8ZM6 10H8V12H6ZM10 10H12V12H10Z", N, "#fff"]],
  sQp: [["M4.500 2.500H11.500V13.500H4.500Z", "#222", "#fff", 1.3], ["M6 5H7.500M9 5H10.500M6 8H7.500M9 8H10.500M6 11H7.500M9 11H10.500", "#222", N, 1.3]],
  sSc: [["M4 0V8M0 4H8", "#222", N, 1.3], ["M5.500 4.500H12.500V11.500H5.500Z", "#2a7a30", "#d8ecd8"], ["M8.500 8.500H14.500V14.500H8.500Z", "#2a7a30", "#a8d0a8", 1.3]],
  sAm: [["M5.500 0.500H10.500V5.500H15.500V10.500H10.500V15.500H5.500V10.500H0.500V5.500H5.500Z", "#444", "#f4f4f4", 1.3]],
  layoutPage: [["M2.500 1.500H13.500V11.500H2.500Z", "#333", "#fff", 1.3], ["M5 4V9.500H10.500Z", "#222", "#aaa", 1.2], ["M0 14.500H16", "#555", N, 1.6]],
  viewPair: [["M1 1.500H7.500V8.500H1ZM8.500 1.500H15V8.500H8.500Z", "#333", "#fff", 1.2], ["M1 12.500H15", "#444", "#888", 3], ["M2 12.500H14", "#aaa"]],
  annot: [["M8 1L10 3V8L15 13L9 11L8 15L7 11L1 13L6 8V3Z", "#444", "#f0f0f0", 1.2]],
  annotSun: [["M7 1L9 3V8L13 13L8 11L7 15L6 11L0.500 13L5 8V3Z", "#444", "#f0f0f0", 1.2], ["M9 9A3 3 0 1 0 15 9A3 3 0 1 0 9 9", "#e88010", "#fff0a0", 1.4]],
  annotOff: [["M8 1L10 3V8L15 13L9 11L8 15L7 11L1 13L6 8V3Z", "#888", "#a8a8a8", 1.2], ["M1 1H5M4 4L12 12", "#777", N, 1.4]],
  gear: [["M8 0.500L9.500 3L12.500 1.500L13 4.500L15.500 6L14 8L15.500 10.500L13 11.500L12.500 14.500L9.500 13.500L8 15.500L6 13.500L3 14.500L2.500 11.500L0.500 10L2 8L0.500 5.500L3 4.500L3.500 1.500L6.500 3Z", "#444", "#f4f4f4"], ["M5 8A3 3 0 1 0 11 8A3 3 0 1 0 5 8", "#444", "#aaa"], ["M16 12V16H12Z", N, "#111"]],
  lock: [["M1.500 7.500H10.500V14.500H1.500Z", "#333", "#f4f4f4", 1.2], ["M8 7V3Q11 -1 14.500 3V6", "#333", N, 1.8], ["M6 10V12.500", "#333", N, 1.4]],
  ball: [["M1 8A7 7 0 1 0 15 8A7 7 0 1 0 1 8", N, "#777"], ["M3 6A4 4 0 1 0 11 6A4 4 0 1 0 3 6", N, "#b8b8b8"], ["M5 4L7 7L10 3", "#fff", N, 1.2]],
  mail: [["M1 6L8 1L15 6V15H1Z", "#3a78c0", "#fff"], ["M4 5A4 3 0 0 1 12 5V8H4Z", N, "#f4a828"], ["M1 15L8 9L15 15Z", "#3a78c0", "#a8d4f4"]],
  pubDone: [["M1 3H12V13H1Z", "#444", "#3a88d0"], ["M1 9H10V14H1Z", N, "#f0d020"], ["M5 1H12V7H5Z", "#333", "#dde"], ["M7 11L10 14L15 8", "#1ca020", N, 2.4]],
  lamp: [["M4 5A4 4 0 1 1 12 5Q12 7 10 9V11H6V9Q4 7 4 5Z", "#b09030", "#fff4b0"], ["M6 12H10V15H6Z", "#555", "#bbb"]],
  cleanScr: [["M1.500 1.500H14.500V14.500H1.500Z", "#333", "#f4f4f4", 1.3], ["M2 3.500H14", "#888", N, 2]],
  pick: [["M1.500 1.500H9.500V8.500H1.500Z", "#701010", "#fff", 1.4], ["M7.500 4.500V14L9.500 12L11.500 15.500L13 14.500L11.500 11.500H14Z", "#111", "#fff"], ["M5 5H7", "#701010"]],
  phi1: [["M2.500 7.500A5.500 4 0 1 0 13.500 7.500A5.500 4 0 1 0 2.500 7.500M8 1V14.500M6 1.500H10M6 14H10", "#1010f0", N, 1.2]],
  phi2: [["M2.500 7A5.500 4 0 1 0 13.500 7A5.500 4 0 1 0 2.500 7M8 1V13.500M4 11.500H12M2 14H14", "#1010f0", N, 1.2]],
  phi3: [["M2.500 7A5.500 4 0 1 0 13.500 7A5.500 4 0 1 0 2.500 7M6.500 1V13.500M9.500 1V13.500M4 11.500H12M2 14H14", "#1010f0", N, 1.2]],
  phi4: [["M2.500 7.500A5.500 4 0 1 0 13.500 7.500A5.500 4 0 1 0 2.500 7.500M6.500 2V13.500M9.500 2V13.500M2 1.500H14M4 12H12M2 14.500H14", "#1010f0", N, 1.2]],
  phiSmall: [["M4.500 9A3.500 3 0 1 0 11.500 9A3.500 3 0 1 0 4.500 9M8 3.500V15", "#222", N, 1.2]],
};

const Glyph = ({ name, size = 16 }: { name: string; size?: number }) => (
  <svg width={size} height={size} viewBox="0 0 16 16" aria-hidden="true">
    {(glyphs[name] || []).map(([d, stroke = N, fill = N, w = 1], i) => (
      <path key={i} d={d} stroke={stroke} fill={fill} strokeWidth={w} />
    ))}
  </svg>
);

/* ---------- shell ---------- */

const Shell = styled.div`
  display: flex;
  flex-direction: column;
  height: 100vh;
  background: #686868;
  font: 12px/18px ${sans};
  color: #000;
  overflow: hidden;
`;

const TitleBar = styled.header`
  display: grid;
  grid-template-columns: 1fr auto 1fr;
  align-items: center;
  flex: none;
  height: 25px;
  background: #fff;
  border-bottom: 1px solid #222;
`;

const AppTitle = styled.h1`
  grid-column: 2;
  margin: 0 0 0 268px;
  font: 12px/24px ${sans};
  white-space: pre;
`;

const WindowButtons = styled.div`
  justify-self: end;
  display: flex;
  margin-right: 4px;
  button {
    display: grid;
    place-items: center;
    width: 45px;
    height: 24px;
  }
`;

const MenuBar = styled.nav`
  display: flex;
  align-items: center;
  flex: none;
  height: 20px;
  padding-left: 420px;
  background: linear-gradient(#acacac, #505050);
  color: #fff;
`;

const MenuItem = styled.button<{ $tight?: boolean }>`
  padding: 0 ${(p) => (p.$tight ? 7 : 12)}px 0 ${(p) => (p.$tight ? 7 : 13)}px;
  white-space: nowrap;
`;

const MenuEnd = styled.div`
  display: flex;
  gap: 5px;
  margin: 0 4px 0 auto;
  button { display: grid; place-items: center; width: 12px; height: 16px; }
`;

const FileTabs = styled.div`
  display: flex;
  align-items: flex-end;
  flex: none;
  height: 27px;
  padding-left: 386px;
  background: linear-gradient(#a6a6a6, #929292);
  border-bottom: 1px solid #a8a8a8;
`;

const FileTab = styled.div<{ $active?: boolean }>`
  display: flex;
  align-items: center;
  justify-content: flex-end;
  height: 23px;
  padding: 0 ${(p) => (p.$active ? "22px 0 8px" : "30px 0 0")};
  gap: 7px;
  background: ${(p) => (p.$active ? "linear-gradient(#dcdcdc, #aaa)" : "linear-gradient(#a8a8a8, #8c8c8c)")};
  border-top: 1px solid ${(p) => (p.$active ? "#f4f4f4" : "#c4c4c4")};
  border-radius: 8px 14px 0 0;
  color: ${(p) => (p.$active ? "#000" : "#555")};
  white-space: nowrap;
`;

const CloseMark = styled.button`
  color: #777;
  font: bold 15px/16px ${sans};
`;

const AddTab = styled.button`
  display: grid;
  place-items: center;
  width: 22px;
  height: 17px;
  margin: 0 0 3px 1px;
  background: #858585;
  border: 1px solid #6a6a6a;
  border-radius: 0 10px 0 8px;
`;

/* ---------- toolbars ---------- */

const ToolRows = styled.div`
  display: flex;
  flex-direction: column;
  flex: none;
  gap: 3px;
  padding: 4px 0 4px 442px;
`;

const ToolRow = styled.div`
  display: flex;
  gap: 2px;
`;

const DockRow = styled.div`
  display: flex;
  flex: none;
  margin: 0 0 6px -2px;
`;

const Bar = styled.div<{ $lead?: number }>`
  display: flex;
  align-items: stretch;
  flex: none;
  height: 24px;
  padding-left: ${(p) => p.$lead || 0}px;
  background: #ececec;
  border: 1px solid #2e2e2e;
`;

const VBar = styled.div<{ $clip?: boolean }>`
  display: flex;
  flex-direction: column;
  flex: ${(p) => (p.$clip ? "0 1 auto" : "none")};
  min-height: 0;
  width: 25px;
  background: #ececec;
  border: 1px solid #2e2e2e;
  border-bottom-width: ${(p) => (p.$clip ? 0 : 1)}px;
  overflow: hidden;
`;

const dots = css`
  content: "";
  background-color: #999;
  background-image: linear-gradient(90deg, #111 1px, transparent 1px), linear-gradient(#333 1px, transparent 1px);
  background-size: 2px 2px;
`;

const Grip = styled.div<{ $vertical?: boolean }>`
  display: grid;
  place-items: center;
  flex: none;
  background: #5c5c5c;
  ${(p) => (p.$vertical ? "height: 8px;" : "width: 8px;")}
  &::before {
    ${dots}
    ${(p) => (p.$vertical ? "width: 14px; height: 4px;" : "width: 4px; height: 14px;")}
  }
`;

const Tool = styled.button`
  display: grid;
  place-items: center;
  flex: none;
  width: 23px;
  height: 22px;
`;

const SetTool = styled(Tool)`
  color: #2a6aa8;
  font: 15px/16px ${cjk};
`;

const Rule = styled.div<{ $vertical?: boolean }>`
  flex: none;
  background: #888;
  ${(p) => (p.$vertical ? "height: 1px; margin: 2px 2px 3px;" : "width: 1px; margin: 2px;")}
`;

const Tools = ({ items, vertical }: { items: string; vertical?: boolean }) => (
  <>
    {items.split(" ").map((n, i) =>
      n === "|" ? (
        <Rule key={i} $vertical={vertical} />
      ) : (
        <Tool key={i} aria-label={n}>
          <Glyph name={n} />
        </Tool>
      )
    )}
  </>
);

type ComboProps = { $w: number; $h?: number; $bg?: string; $bd?: string; $ink?: string; $pad?: number; $font?: string };
const Combo = styled.span<ComboProps>`
  display: inline-grid;
  grid-template-columns: 1fr 18px;
  align-items: center;
  flex: none;
  width: ${(p) => p.$w}px;
  height: ${(p) => p.$h || 22}px;
  background: ${(p) => p.$bg || "#c8c8c8"};
  border: 1px solid ${(p) => p.$bd || "#d4d4d4"};
  color: ${(p) => p.$ink || "#666"};
  select, input {
    grid-area: 1 / 1 / 2 / 3;
    width: 100%;
    height: 100%;
    min-width: 0;
    padding-left: ${(p) => p.$pad || 4}px;
    font: ${(p) => p.$font || `12px/16px ${sans}`};
    opacity: 1;
  }
  > svg { grid-area: 1 / 2; justify-self: center; pointer-events: none; }
`;

const Lead = styled.span<{ $w: number; $block?: boolean }>`
  grid-area: 1 / 1;
  width: ${(p) => p.$w}px;
  height: ${(p) => (p.$block ? 10 : 1)}px;
  margin-left: 4px;
  background: ${(p) => (p.$block ? "#f00" : "#000")};
  ${(p) => p.$block && "border: 1px solid #222;"}
  pointer-events: none;
`;

const Chevron = ({ ink = "#999" }: { ink?: string }) => (
  <svg width="9" height="6" viewBox="0 0 9 6" aria-hidden="true">
    <path d="M0.500 0.500L4.500 4.500L8.500 0.500" fill="none" stroke={ink} strokeWidth="1.200" />
  </svg>
);

type PickProps = { w: number; label: string; value: string; pad?: number; font?: string; children?: React.ReactNode };
const BarPick = ({ w, label, value, pad, font, children }: PickProps) => (
  <Combo $w={w} $pad={pad} $font={font}>
    <select aria-label={label}>
      <option>{value}</option>
    </select>
    {children}
    <Chevron />
  </Combo>
);

/* ---------- body ---------- */

const Body = styled.div`
  display: flex;
  flex: 1;
  min-height: 0;
  gap: 5px;
  padding-bottom: 1px;
`;

const Tree = styled.aside`
  flex: none;
  width: 88px;
  margin-bottom: 2px;
  padding-top: 48px;
  background: #f0f0f0;
  border-bottom: 1px solid #fff;
  overflow: hidden;
`;

const TreeGroup = styled.ul<{ $open?: boolean }>`
  margin: 0;
  padding: 0;
  list-style: none;
  ${(p) =>
    p.$open &&
    css`
      margin: 1px 0 2px;
      background: #efefeb;
      border-top: 3px double #777;
      border-bottom: 2px solid #fff;
    `}
`;

const TreeItem = styled.button`
  display: grid;
  grid-template-columns: 28px 1fr;
  align-items: center;
  width: 100%;
  height: 18px;
  font: 12px/18px ${cjk};
  text-align: left;
  white-space: pre;
  svg { margin-left: 3px; }
`;

const TreeArrow = styled.i<{ $down?: boolean }>`
  width: 0;
  height: 0;
  margin-left: ${(p) => (p.$down ? 6 : 8)}px;
  border: solid transparent;
  ${(p) => (p.$down ? "border-width: 5px 5px 0; border-top-color: #2a6098;" : "border-width: 5px 0 5px 5px; border-left-color: #2a6098;")}
`;

const TreeRule = styled.li`
  height: 6px;
  margin-left: 3px;
  border-top: 3px solid #efefeb;
  background: linear-gradient(#999 1px, #fff 1px, #fff 2px, #efefeb 2px);
`;

const Right = styled.div`
  display: flex;
  flex-direction: column;
  flex: 1;
  min-width: 0;
`;

const Upper = styled.div`
  display: flex;
  flex: 1;
  min-height: 0;
  gap: 4px;
  padding-right: 3px;
`;

const Center = styled.main`
  display: flex;
  flex-direction: column;
  flex: 1;
  min-width: 0;
`;

const VStack = styled.div<{ $shift?: boolean }>`
  display: flex;
  flex-direction: column;
  flex: none;
  margin: 0 0 3px ${(p) => (p.$shift ? -1 : 0)}px;
  min-height: 0;
`;

const DocTabs = styled.div`
  display: flex;
  flex: none;
  height: 21px;
  padding-left: 291px;
  background: #f0f0f0;
  border-top: 1px solid #ddd;
  border-bottom: 2px solid #7c7c7c;
`;

const DocTab = styled.button<{ $active?: boolean }>`
  height: 18px;
  padding: 0 8px;
  margin-right: ${(p) => (p.$active ? 0 : 3)}px;
  background: ${(p) => (p.$active ? "#fce4e6" : "#f0f0f0")};
  color: ${(p) => (p.$active ? "#1414f0" : "#000")};
  border-right: ${(p) => (p.$active ? "0" : "1px solid #333")};
  border-left: ${(p) => (p.$active ? "1px solid #333" : "0")};
  font: 12px/18px ${song};
  white-space: nowrap;
`;

const CanvasFrame = styled.div`
  position: relative;
  flex: 1;
  min-height: 0;
  background: #000;
  border-left: 1px solid #999;
  border-right: 2px solid #f4f4f4;
  overflow: hidden;
  > svg { display: block; width: 100%; height: 100%; }
`;

const Readout = styled.output`
  position: absolute;
  left: 857px;
  top: 700px;
  height: 20px;
  padding: 0 9px 0 3px;
  background: #999;
  font: 12px/20px ${sans};
  white-space: pre;
`;

const LayoutTabs = styled.div`
  display: flex;
  flex: none;
  height: 17px;
  margin-bottom: 4px;
  background: #f0f0f0;
  border-bottom: 2px solid #fff;
`;

const NavButton = styled.button`
  display: grid;
  place-items: center;
  width: 14px;
  height: 15px;
  border-right: 1px solid #999;
`;

const LayoutTab = styled.button<{ $active?: boolean }>`
  height: 15px;
  padding: 0 ${(p) => (p.$active ? "9px 0 11px" : "8px 0 6px")};
  font: 12px/15px ${cjk};
  color: ${(p) => (p.$active ? "#fff" : "#000")};
  background: ${(p) => (p.$active ? "#000" : "#f0f0f0")};
  clip-path: ${(p) => (p.$active ? "polygon(0 0, 100% 0, calc(100% - 6px) 100%, 6px 100%)" : "none")};
  margin-left: 1px;
`;

const Command = styled.section`
  display: grid;
  grid-template-columns: 23px 1fr;
  grid-template-rows: 33px 23px;
  flex: none;
  height: 58px;
  margin: 0 1px 0 -1px;
  border-top: 1px solid #777;
  border-bottom: 1px solid #777;
  font: 13px/14px ${cjk};
`;

const CommandSide = styled.div`
  grid-row: 1 / 3;
  display: flex;
  flex-direction: column;
  align-items: center;
  gap: 5px;
  padding-top: 5px;
  background: linear-gradient(#777, #4a4a4a);
  &::before { ${dots} width: 16px; height: 5px; flex: none; opacity: 0.6; }
`;

const History = styled.div`
  padding: 2px 0 0 2px;
  background: #c8c8c8;
  white-space: pre;
  p { margin: 0; }
`;

const Code = styled.span<{ $bold?: boolean; $lead?: boolean }>`
  margin-right: ${(p) => (p.$lead ? 4 : 0)}px;
  font: ${(p) => (p.$bold ? "bold" : "normal")} 12px/14px ${mono};
`;

const Prompt = styled.label`
  display: flex;
  align-items: center;
  background: #fff;
  border-top: 1px solid #777;
  padding-left: 5px;
  white-space: pre;
  input { flex: 1; min-width: 0; height: 20px; outline: none; }
`;

const PromptIcon = styled.span`
  display: grid;
  place-items: center;
  width: 14px;
  height: 14px;
  background: #d4dce4;
  border: 1px solid #9aa4ae;
`;

const PromptArrow = styled.i`
  margin: 0 7px 0 4px;
  border: solid transparent;
  border-width: 3px 3px 0;
  border-top-color: #888;
`;

/* ---------- status ---------- */

const StatusBar = styled.footer`
  display: flex;
  flex: none;
  height: 23px;
  background: linear-gradient(#9c9c9c, #808080);
  border-top: 1px solid #111;
  font: 12px/22px ${cjk};
`;

const Cell = styled.button<{ $w: number; $on?: boolean }>`
  display: flex;
  align-items: center;
  justify-content: center;
  gap: 3px;
  flex: none;
  width: ${(p) => p.$w}px;
  background: ${(p) => (p.$on ? "linear-gradient(#d4f0f8, #8cc4d8)" : "linear-gradient(#c8c8c8, #9c9c9c)")};
  border-right: 1px solid #555;
  white-space: pre;
`;

const Num = styled.span`
  font: 11px/22px ${mono};
  white-space: pre;
`;

const Coords = styled.span`
  flex: none;
  width: 158px;
  padding: 2px 0 0 7px;
  font: 10px/22px ${mono};
  white-space: pre;
  border-right: 1px solid #555;
`;

const Fill = styled.span<{ $w?: number }>`
  flex: ${(p) => (p.$w ? `0 0 ${p.$w}px` : "1")};
  border-right: 1px solid #555;
`;

const Tray = styled.span`
  display: flex;
  align-items: center;
  justify-content: space-around;
  flex: none;
  width: 72px;
  padding-right: 8px;
  border: 1px solid #444;
  border-right-color: #999;
  background: linear-gradient(#b0b0b0, #888);
`;

const Caret = styled.i`
  border: solid transparent;
  border-width: 5px 4px 0;
  border-top-color: #111;
`;

const Taskbar = styled.div`
  display: flex;
  justify-content: space-between;
  flex: none;
  height: 8px;
  padding: 0 74px 0 48px;
  background: #18202a;
  color: #fff;
  font: 12px/22px ${sans};
  overflow: hidden;
`;

const TaskSearch = styled.span`
  width: 343px;
  height: 8px;
  background: #f2f2f2;
`;

/* ---------- floating dialog ---------- */

const Dialog = styled.form`
  position: absolute;
  left: 0;
  top: 0;
  width: 443px;
  height: 217px;
  background: #f0f0f0;
  border: 1px solid #2a2a2a;
  font: 12px/16px ${cjk};
`;

const DialogGrip = styled.div`
  display: flex;
  align-items: center;
  gap: 4px;
  height: 14px;
  padding: 0 3px 0 2px;
  background: #5f5f5f;
  &::before { ${dots} flex: 1; height: 10px; background-color: #777; }
  button { display: grid; place-items: center; width: 13px; height: 12px; border-left: 1px solid #999; padding-left: 3px; }
`;

const DialogTabs = styled.div`
  display: flex;
  height: 18px;
  background: linear-gradient(#8a8a8a, #a4a4a4);
  border-top: 1px solid #444;
  border-bottom: 1px solid #777;
`;

const DialogTab = styled.button`
  height: 17px;
  padding: 0 6px;
  background: #f0f0f0;
  border-right: 1px solid #555;
  font: 12px/16px ${cjk};
`;

const SymbolRow = styled.div`
  display: flex;
  align-items: center;
  height: 28px;
  padding-left: 5px;
`;

const Symbol = styled.button<{ $ink?: string; $gap?: number; $size?: number; $bold?: boolean }>`
  display: flex;
  align-items: center;
  justify-content: center;
  width: 23px;
  margin-right: ${(p) => p.$gap || 0}px;
  color: ${(p) => p.$ink || "#000"};
  font: ${(p) => (p.$bold ? "bold" : "normal")} ${(p) => p.$size || 14}px/20px ${song};
  sub, sup { font-size: 10px; line-height: 10px; color: #000; }
  sup { align-self: flex-start; }
  sub { align-self: flex-end; }
`;

const Groups = styled.div`
  display: flex;
  gap: 5px;
  padding: 0 9px 0 11px;
`;

const Group = styled.fieldset<{ $w: number }>`
  display: grid;
  align-content: start;
  gap: 5px;
  width: ${(p) => p.$w}px;
  height: 93px;
  margin: 0;
  padding: 1px 5px 0;
  min-width: 0;
  border: 1px solid #dcdcdc;
  legend { margin-left: 3px; padding: 0; }
`;

const Field = styled.div<{ $label?: number }>`
  display: flex;
  align-items: center;
  height: 20px;
  label { width: ${(p) => p.$label || 60}px; padding-top: 2px; white-space: nowrap; }
`;

const SizeButton = styled.button`
  width: 43px;
  height: 20px;
  margin: 0 4px 0 9px;
  background: #e1e1e1;
  border: 1px solid #adadad;
  font: 12px/16px ${cjk};
`;

const DialogFoot = styled.div`
  display: grid;
  grid-template-columns: 265px 1fr;
  align-items: start;
  padding: 6px 0 0 20px;
`;

const Checks = styled.div`
  display: grid;
  gap: 2px;
`;

const Check = styled.div`
  display: flex;
  align-items: center;
  height: 20px;
  label { display: flex; align-items: center; gap: 3px; margin-right: 8px; white-space: nowrap; }
  input[type="checkbox"] {
    appearance: none;
    width: 13px;
    height: 13px;
    background: #fff;
    border: 1px solid #333;
  }
`;

const digits = `12px/16px ${song}`;
const tiny = `10px/16px ${mono}`;

type BoxProps = { w: number; flat?: boolean; font?: string; children: React.ReactNode };
const DialogCombo = ({ w, flat, font = digits, children }: BoxProps) => (
  <Combo $w={w} $h={20} $bg={flat ? "#e1e1e1" : "#fff"} $bd={flat ? "#adadad" : "#7a7a7a"} $ink="#000" $pad={flat ? 3 : 2} $font={font}>
    {children}
  </Combo>
);

const IndexDialog = () => (
  <Dialog onSubmit={(e) => e.preventDefault()}>
    <DialogGrip>
      <button type="button" aria-label="关闭">
        <svg width="8" height="8" viewBox="0 0 8 8"><path d="M1 1L7 7M7 1L1 7" stroke="#e4e4e4" strokeWidth="2" /></svg>
      </button>
    </DialogGrip>
    <DialogTabs><DialogTab type="button">索引符号</DialogTab></DialogTabs>
    <SymbolRow>
      <Symbol type="button" $ink="#f00" $bold $size={15}>O<sub>2</sub></Symbol>
      <Symbol type="button" $ink="#f00" $bold $size={15}>m<sup>2</sup></Symbol>
      <Symbol type="button" aria-label="圈号" $gap={7}>
        <svg width="15" height="15" viewBox="0 0 15 15">
          <circle cx="7.500" cy="7.500" r="6.500" fill="none" stroke="#f00" strokeWidth="1.500" />
          <path d="M5.500 5L8 3.500V11M5.500 11.500H10" fill="none" stroke="#111" strokeWidth="1.500" />
        </svg>
      </Symbol>
      <Symbol type="button" $size={16}>°</Symbol>
      <Symbol type="button" $size={19}>±</Symbol>
      <Symbol type="button" aria-label="直径"><Glyph name="phiSmall" /></Symbol>
      <Symbol type="button" $bold $gap={9} $size={13}>%</Symbol>
      <Symbol type="button" aria-label="一级钢"><Glyph name="phi1" /></Symbol>
      <Symbol type="button" aria-label="二级钢"><Glyph name="phi2" /></Symbol>
      <Symbol type="button" aria-label="三级钢"><Glyph name="phi3" /></Symbol>
      <Symbol type="button" aria-label="四级钢" $gap={7}><Glyph name="phi4" /></Symbol>
      <Symbol type="button" $ink="#f00" $size={17}>ζ</Symbol>
      <Symbol type="button" $ink="#f00" $bold $size={13}>词</Symbol>
      <Symbol type="button" aria-label="拾取"><Glyph name="pick" /></Symbol>
    </SymbolRow>
    <Groups>
      <Group $w={159}>
        <legend>索引文字</legend>
        <Field>
          <label htmlFor="idx-no">索引编号:</label>
          <DialogCombo w={53}><input id="idx-no" defaultValue="1" /><Chevron ink="#555" /></DialogCombo>
        </Field>
        <Field>
          <label htmlFor="idx-fig">索引图号:</label>
          <DialogCombo w={53}><input id="idx-fig" defaultValue="-" /></DialogCombo>
        </Field>
        <Field>
          <label htmlFor="idx-style">文字样式:</label>
          <DialogCombo w={86} flat font={tiny}><select id="idx-style"><option>_TCH_LABEL</option></select><Chevron ink="#555" /></DialogCombo>
        </Field>
      </Group>
      <Group $w={258}>
        <legend>标注文字</legend>
        <Field>
          <label htmlFor="txt-up">上标文字:</label>
          <DialogCombo w={182}><input id="txt-up" defaultValue="1231" /><Chevron ink="#555" /></DialogCombo>
        </Field>
        <Field>
          <label htmlFor="txt-down">下标文字:</label>
          <DialogCombo w={182}><input id="txt-down" defaultValue="21321" /><Chevron ink="#555" /></DialogCombo>
        </Field>
        <Field>
          <label htmlFor="txt-style">文字样式:</label>
          <DialogCombo w={72} flat font={tiny}><select id="txt-style"><option>_TCH_DIM</option></select><Chevron ink="#555" /></DialogCombo>
          <SizeButton type="button">字高&lt;</SizeButton>
          <DialogCombo w={54}><input aria-label="字高" defaultValue="3.5" /><Chevron ink="#555" /></DialogCombo>
        </Field>
      </Group>
    </Groups>
    <DialogFoot>
      <Field $label={132}>
        <label htmlFor="align">文字相对基线对齐方式:</label>
        <DialogCombo w={77} font={`12px/16px ${cjk}`}><select id="align"><option>末端对齐</option></select><Chevron ink="#555" /></DialogCombo>
      </Field>
      <Checks>
        <Check><label><input type="checkbox" />在延长线上标注文字</label></Check>
        <Check>
          <label><input type="checkbox" />固定角度</label>
          <Combo $w={56} $h={20} $bg="#f4f4f4" $bd="#ccc" $ink="#777" $pad={2} $font={digits}>
            <select aria-label="固定角度值" disabled><option>90</option></select>
            <Chevron ink="#bbb" />
          </Combo>
        </Check>
      </Checks>
    </DialogFoot>
  </Dialog>
);

/* ---------- drawing ---------- */

const CircleOutline = ({ cx, cy, r }: { cx: number; cy: number; r: number }) => {
  const pts = Array.from({ length: 36 }, (_, i) => {
    const a = (i * Math.PI) / 18;
    return `${cx + r * Math.cos(a)},${cy + r * Math.sin(a)}`;
  });
  return <polygon points={pts.join(" ")} fill="none" stroke="#f00" />;
};

const Drawing = () => (
  <svg shapeRendering="crispEdges" role="img" aria-label="图形区">
    <line x1="0" x2="100%" y1="682.500" y2="682.500" stroke="#fff" />
    <line x1="840.500" x2="840.500" y1="0" y2="100%" stroke="#fff" />
    <CircleOutline cx={707} cy={561.5} r={133.5} />
    <line x1="706" x2="840" y1="561.500" y2="561.500" stroke="#999" />
    <path d="M18.500 660V710.500H69M14.500 706.500H23.500V715.500H14.500Z" fill="none" stroke="#fff" />
    <path d="M20 643L26.500 650L33 643M26.500 650V656M73 696L86 709M86 696L73 709" fill="none" stroke="#fff" />
  </svg>
);

const Markup = styled.svg`
  position: absolute;
  left: 0;
  bottom: 0;
  pointer-events: none;
`;

const Watermark = styled.svg`
  position: absolute;
  right: 94px;
  bottom: 34px;
  pointer-events: none;
`;

const treeTop = ["轴网柱子", "墙　　体", "门　　窗", "房间屋顶", "楼梯其他", "立　　面", "剖　　面", "文字表格", "尺寸标注", "符号标注"];
const treeOpen: (null | [string, string])[] = [
  ["bulb", "静态标注"], ["coord", "坐标标注"], ["coordCheck", "坐标检查"], ["elevMark", "标高标注"], ["elevCheck", "标高检查"], ["elevAlign", "标高对齐"], null,
  ["arrowA", "箭头引注"], ["leaderOut", "引出标注"], ["practice", "做法标注"], ["index", "索引符号"], null,
  ["indexName", "索引图名"], ["section", "剖切符号"], ["cloud", "绘制云线"], ["breakLine", "加折断线"], null,
  ["symAxis", "画对称轴"], ["north", "画指北针"], ["caption", "图名标注"], null,
  ["defLayer", "o默认层o"], ["textReset", "文字复位"],
];
const treeBottom = ["图层控制", "工　　具", "三维建模", "图块图案", "场地布置", "文件布图", "其　　它", "数据中心", "帮助演示"];

const Branches = ({ names, openLast }: { names: string[]; openLast?: boolean }) => (
  <TreeGroup>
    {names.map((n, i) => (
      <li key={n}><TreeItem><TreeArrow $down={openLast && i === names.length - 1} />{n}</TreeItem></li>
    ))}
  </TreeGroup>
);

export default function App() {
  return (
    <Shell>
      <GlobalStyle />
      <TitleBar>
        <AppTitle>{"T20天正建筑软件 V3.0 For Autodesk AutoCAD 2014     6＃楼平面指标及一层修改.dwg"}</AppTitle>
        <WindowButtons>
          <button aria-label="最小化"><svg width="10" height="10"><path d="M0 5.500H10" stroke="#888" /></svg></button>
          <button aria-label="还原"><svg width="11" height="11"><path d="M0.500 2.500H7.500V10H0.500ZM2.500 2V0.500H9.500V7.500H8" fill="none" stroke="#888" /></svg></button>
          <button aria-label="关闭"><svg width="11" height="11"><path d="M0.500 0.500L10.500 10.500M10.500 0.500L0.500 10.500" stroke="#888" /></svg></button>
        </WindowButtons>
      </TitleBar>
      <MenuBar>
        {["绘图(D)", "标注(N)", "修改(M)", "参数(P)", "窗口(W)", "帮助(H)"].map((m) => <MenuItem key={m}>{m}</MenuItem>)}
        {["源泉设计", "协同设计", "标准化工具箱"].map((m) => <MenuItem key={m} $tight>{m}</MenuItem>)}
        <MenuEnd>
          <button aria-label="最小化文档"><svg width="12" height="12"><path d="M1 10H11" stroke="#222" strokeWidth="2" /></svg></button>
          <button aria-label="还原文档"><svg width="12" height="12"><path d="M1 5H8V11H1ZM4 4V1H11V7H9" fill="none" stroke="#222" strokeWidth="1.500" /></svg></button>
          <button aria-label="关闭文档"><svg width="10" height="10"><path d="M1 1L9 9M9 1L1 9" stroke="#222" strokeWidth="2.500" /></svg></button>
        </MenuEnd>
      </MenuBar>
      <FileTabs>
        <FileTab>指标及一层修改*</FileTab>
        <FileTab $active>6＃楼平面指标及一层修改*<CloseMark aria-label="关闭标签">×</CloseMark></FileTab>
        <AddTab aria-label="新建标签"><svg width="8" height="8"><path d="M4 0V8M0 4H8" stroke="#ccc" strokeWidth="2" /></svg></AddTab>
      </FileTabs>

      <ToolRows>
        <ToolRow>
          <Bar $lead={6}><Tools items="zoomPrev | props design palettes sheets markup calc | help" /></Bar>
          <Bar>
            <Grip />
            <Tools items="textStyle" /><BarPick w={121} label="文字样式" value="HZTXT" pad={18} /><Rule />
            <Tools items="dimStyle" /><BarPick w={121} label="标注样式" value="STANDARD" pad={18} /><Rule />
            <Tools items="tableStyle" /><BarPick w={121} label="表格样式" value="Standard" /><Rule />
            <Tools items="leaderStyle" /><BarPick w={121} label="引线样式" value="Standard" pad={18} />
          </Bar>
        </ToolRow>
        <ToolRow>
          <Bar>
            <BarPick w={120} label="图层" value="" />
            <Tools items="layerState layerPrev layerMgr" />
          </Bar>
          <Bar>
            <Grip />
            <BarPick w={149} label="颜色" value="ByLayer" pad={18} font={digits}><Lead $w={10} $block /></BarPick><Rule />
            <BarPick w={161} label="线型" value="ByLayer" pad={68} font={digits}><Lead $w={60} /></BarPick><Rule />
            <BarPick w={125} label="线宽" value="ByLayer" pad={44} font={digits}><Lead $w={35} /></BarPick><Rule />
            <BarPick w={120} label="打印样式" value="ByColor" pad={9} font={digits} />
          </Bar>
        </ToolRow>
        <ToolRow>
          <Bar $lead={4}><Tools items="eye | vports xclip measure" /></Bar>
          <Bar><Grip /><Tools items="front back above under | alignL alignR alignC | alignT alignB alignM | distV distH distS" /></Bar>
          <Bar><Grip /><Tools items="tableDoor editNote layersBlue gridRed axisTwo axisOne column wall beam door window2 area areaTable stairsA stairsB stairsC plot brushDim book panel elevMark practice arrowA indexName helpBall" /></Bar>
        </ToolRow>
      </ToolRows>

      <Body>
        <Tree>
          <Branches names={treeTop} openLast />
          <TreeGroup $open>
            {treeOpen.map((t, i) => (t ? <li key={i}><TreeItem><Glyph name={t[0]} />{t[1]}</TreeItem></li> : <TreeRule key={i} />))}
          </TreeGroup>
          <Branches names={treeBottom} />
        </Tree>
        <Right>
          <Upper>
            <Center>
              <DocTabs>
                <DocTab>指标及一层修改</DocTab>
                <DocTab $active>6＃楼平面指标及一层修改</DocTab>
              </DocTabs>
              <CanvasFrame>
                <Drawing />
                <Readout>正交: 641.691  &lt;  0°</Readout>
              </CanvasFrame>
              <LayoutTabs>
                {["M2.500 1V9M9 1V9L4 5Z", "M8 1V9L3 5Z", "M3 1V9L8 5Z", "M8.500 1V9M2 1V9L7 5Z"].map((d) => (
                  <NavButton key={d} aria-label="切换布局"><svg width="11" height="10"><path d={d} fill="#666" stroke="#666" /></svg></NavButton>
                ))}
                <LayoutTab $active>模型</LayoutTab>
                <LayoutTab>布局1</LayoutTab>
                <svg width="8" height="15"><path d="M0 15L7 0" stroke="#444" /></svg>
              </LayoutTabs>
              <DockRow>
                <Bar><Grip /><Tools items="bA bB bC bD bE bF bG bH" /><SetTool>设</SetTool><SetTool>定</SetTool></Bar>
                <Bar><Grip /><Tools items="gov hook swirl eyeBlue eyeGray swap screens" /></Bar>
              </DockRow>
            </Center>
            <VStack>
              <VBar><Grip $vertical /><Tools vertical items="erase copy mirror offset array move rotate scale stretch trim extend breakPt breakOn join chamfer fillet blend explode" /></VBar>
            </VStack>
            <VStack $shift>
              <VBar><Grip $vertical /><Tools vertical items="pA pB pC | pD pE pF pG | pH pI pJ | pK pL pM" /></VBar>
              <VBar $clip><Grip $vertical /><Tools vertical items="hA hB hC hD hE | hF hG hH hI hJ hK hL | hM | hN hO hP | lA lB lC lD lE" /></VBar>
            </VStack>
          </Upper>
          <Command>
            <CommandSide>
              <svg width="10" height="10"><path d="M1 1L9 9M9 1L1 9" stroke="#fff" strokeWidth="2" /></svg>
              <svg width="16" height="16" viewBox="0 0 16 16">
                <path d="M6 6L14 14" stroke="#e8e8e8" strokeWidth="2.500" />
                <path d="M5 1.500A3.500 3.500 0 1 1 1.500 5" fill="none" stroke="#e8e8e8" strokeWidth="2" />
              </svg>
            </CommandSide>
            <History>
              <p>命令<Code>: TIndexPtr</Code></p>
              <p>请给出索引节点的位置<Code>&lt;</Code>退出<Code>&gt;:</Code></p>
            </History>
            <Prompt>
              <PromptIcon><svg width="10" height="8"><path d="M1 1L4 4L1 7M5 7.500H9" fill="none" stroke="#445" /></svg></PromptIcon>
              <PromptArrow />
              <Code $bold $lead>TINDEXPTR</Code>请给出索引节点的范围<Code $bold>&lt;0.0&gt;:</Code>
              <input aria-label="命令行" />
            </Prompt>
          </Command>
        </Right>
      </Body>

      <StatusBar>
        <Cell $w={85}>比例 <Num>1:200</Num> <Caret /></Cell>
        <Coords>{"641.691<0  , 0.000"}</Coords>
        {["sInfer", "sSnap", "sGrid", "sOrtho*", "sPolar", "sOsnap", "s3d", "sOtrack*", "sDucs", "sDyn*", "sLwt", "sTpy*", "sQp", "sSc", "sAm"].map((n) => (
          <Cell key={n} $w={22} $on={n.endsWith("*")} aria-label={n}><Glyph name={n.replace("*", "")} /></Cell>
        ))}
        <Fill />
        <Cell $w={28}>模型</Cell>
        <Cell $w={22} aria-label="布局"><Glyph name="layoutPage" /></Cell>
        <Cell $w={22} aria-label="快速查看"><Glyph name="viewPair" /></Cell>
        <Fill $w={18} />
        <Cell $w={54}><Glyph name="annot" /><Num>1:1</Num><Caret /></Cell>
        <Cell $w={22} aria-label="注释可见性"><Glyph name="annotSun" /></Cell>
        <Cell $w={22} aria-label="自动缩放"><Glyph name="annotOff" /></Cell>
        <Fill $w={6} />
        <Cell $w={22} aria-label="工作空间"><Glyph name="gear" /></Cell>
        <Cell $w={22} aria-label="锁定"><Glyph name="lock" /></Cell>
        <Cell $w={22} aria-label="硬件加速"><Glyph name="ball" /></Cell>
        <Cell $w={30}>编组</Cell>
        <Cell $w={30}>基线</Cell>
        <Cell $w={30} $on>填充</Cell>
        <Cell $w={30} $on>加粗</Cell>
        <Cell $w={54}>动态标注</Cell>
        <Tray><Glyph name="mail" /><Glyph name="pubDone" /><Glyph name="lamp" /></Tray>
        <Cell $w={12} aria-label="状态栏菜单"><Caret /></Cell>
        <Cell $w={24} aria-label="全屏显示"><Glyph name="cleanScr" /></Cell>
      </StatusBar>
      <Taskbar><TaskSearch /><span>11:00</span></Taskbar>

      <IndexDialog />

      <Markup width="680" height="280" viewBox="0 768 680 280">
        <path d="M298 982L634 792L636 787L657 786L646 801L642 798L300 983Z" fill="#fb3b38" />
        <rect x="128.500" y="991.500" width="272" height="29" fill="none" stroke="#fb3b38" strokeWidth="3" />
      </Markup>

      <Watermark width="360" height="174" viewBox="1466 840 360 174">
        <mask id="paw">
          <rect x="1590" y="880" width="110" height="80" fill="#fff" />
          <text x="1610" y="944" fontFamily="Liberation Sans, sans-serif" fontWeight="700" fontSize="48" fill="#000">du</text>
        </mask>
        <g fill="#fff" opacity="0.700">
          <text x="1472" y="950" fontFamily="Liberation Sans, sans-serif" fontWeight="700" fontSize="78">Bai</text>
          <ellipse cx="1605" cy="886" rx="13" ry="16" />
          <ellipse cx="1629" cy="862" rx="12" ry="17" />
          <ellipse cx="1660" cy="864" rx="13" ry="16" transform="rotate(12 1660 864)" />
          <ellipse cx="1679" cy="893" rx="13" ry="16" />
          <path mask="url(#paw)" d="M1641 888C1652 888 1658 898 1668 908C1680 918 1684 924 1684 934C1684 948 1672 955 1658 952C1646 949 1636 949 1624 952C1608 955 1599 946 1599 932C1599 922 1606 916 1614 908C1624 898 1630 888 1641 888Z" />
          <text x="1695" y="945" fontFamily="Noto Sans CJK SC, sans-serif" fontWeight="900" fontSize="58">经验</text>
        </g>
        <text x="1477" y="996" fontFamily="Noto Sans, sans-serif" fontSize="39" fill="#fff" opacity="0.850">jingyan.baidu.com</text>
      </Watermark>
    </Shell>
  );
}
